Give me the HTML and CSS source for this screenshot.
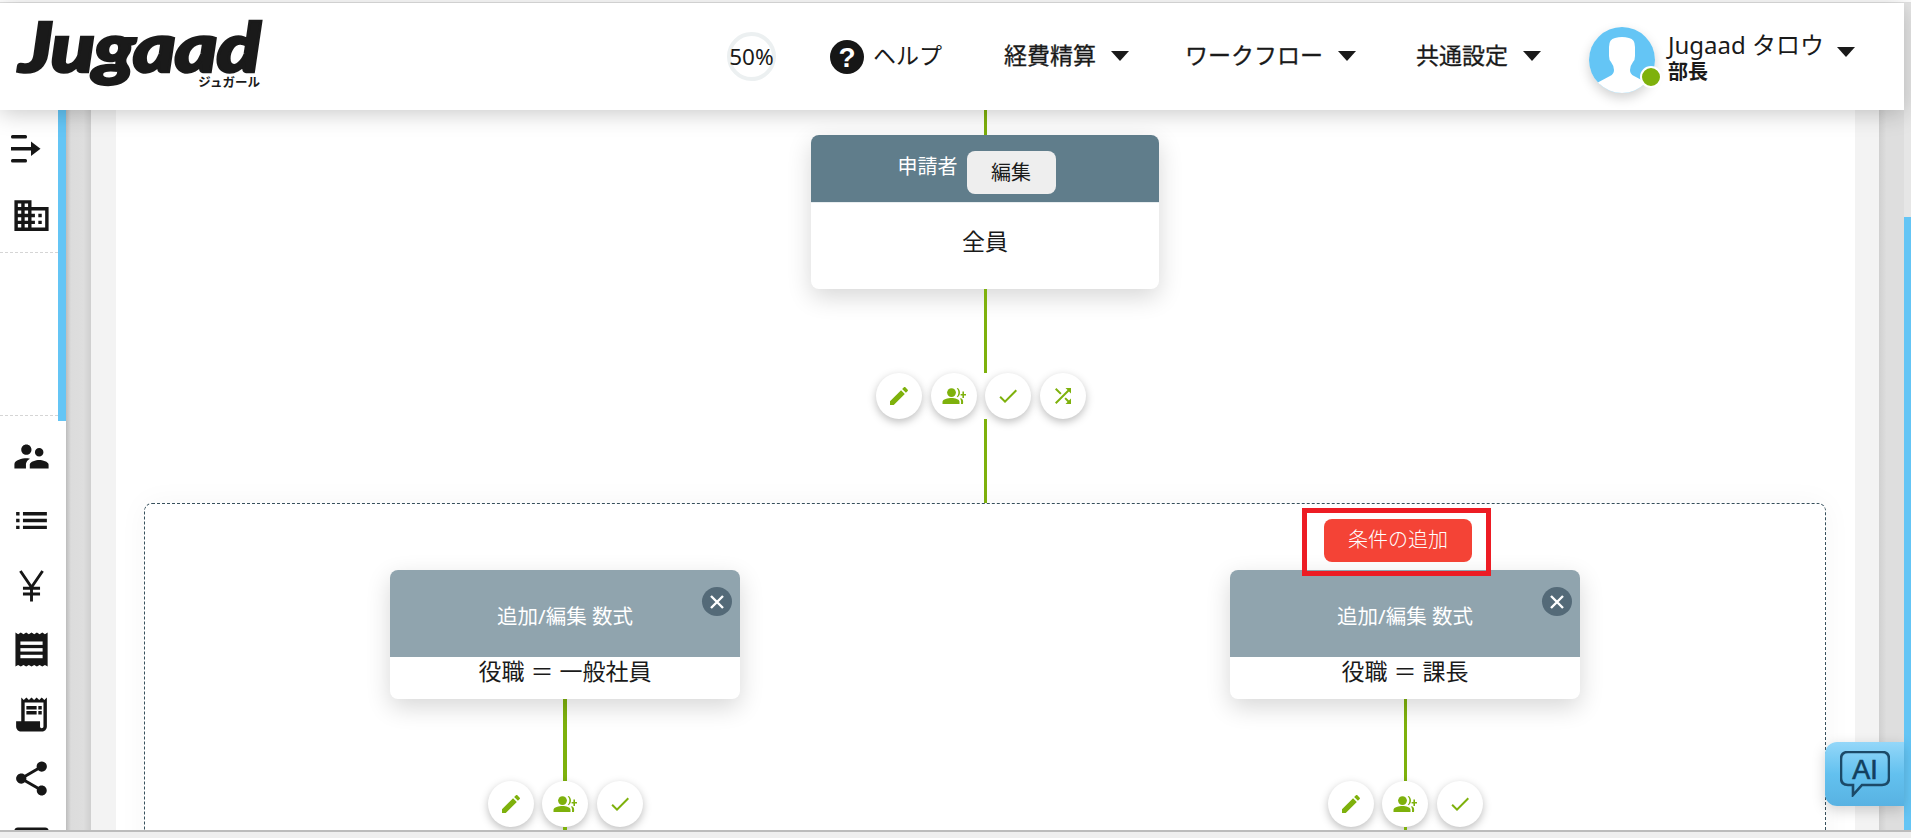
FILE: index.html
```html
<!DOCTYPE html>
<html lang="ja">

<head>
    <meta charset="utf-8">
    <title>Jugaad</title>
    <link rel="stylesheet" href="styles.css">
</head>

<body>
    <div class="page">
        <div class="top__line"></div>
        <div class="frame">
            <div class="content">
                <header class="header">
                    <div class="logo">
                        <span class="logo__word">Jugaad</span>
                        <span class="logo__kana">ジュガール</span>
                    </div>
                    <nav class="nav">
                        <div class="progress">50%</div>
                        <div class="nav__item help">
                            <svg class="help__icon" viewBox="0 0 34 34">
                                <circle cx="17" cy="17" r="17" fill="#161616"></circle>
                                <text x="17" y="27" text-anchor="middle" class="help__mark">?</text>
                            </svg>
                            ヘルプ
                        </div>
                        <div class="nav__item nav__item--expense">経費精算<span class="caret"></span></div>
                        <div class="nav__item nav__item--flow">ワークフロー<span class="caret"></span></div>
                        <div class="nav__item nav__item--common">共通設定<span class="caret"></span></div>
                        <div class="user">
                            <div class="avatar">
                                <svg viewBox="0 0 66 66">
                                    <defs>
                                        <clipPath id="avatarClip">
                                            <circle cx="33" cy="33" r="33"></circle>
                                        </clipPath>
                                    </defs>
                                    <g clip-path="url(#avatarClip)">
                                        <rect width="66" height="66" fill="#64c5f5"></rect>
                                        <path d="M26 11 Q33 9 40 11 Q46 12 46 20 V29 Q46 33 44 35 Q41 39 41 43 Q41 47 45 49 L60 57 V66 H6 V57 L21 49 Q25 47 25 43 Q25 39 22 35 Q20 33 20 29 V20 Q20 12 26 11Z" fill="#fff"></path>
                                    </g>
                                </svg>
                                <span class="avatar__dot"></span>
                            </div>
                            <div class="user__text">
                                <div class="user__name">Jugaad タロウ</div>
                                <div class="user__role">部長</div>
                            </div>
                            <span class="caret caret--user"></span>
                        </div>
                    </nav>
                </header>

                <div class="workspace">
                    <aside class="sidebar">
                        <div class="sidebar__icons">
                            <div class="side__group side__group--top">
                                <div class="side__item side__item--menu">
                                    <svg class="side__menu" viewBox="0 0 30 28">
                                        <rect x="0" y="0" width="16" height="3.5" rx="1.5"></rect>
                                        <rect x="0" y="12" width="21" height="3.5"></rect>
                                        <path d="M20 6.5 L29.5 13.7 L20 21Z"></path>
                                        <rect x="0" y="24" width="16" height="3.5" rx="1.5"></rect>
                                    </svg>
                                </div>
                                <div class="side__item side__item--domain">
                                    <svg class="side__icon" viewBox="0 0 24 24"><path d="M12 7V3H2v18h20V7H12zM6 19H4v-2h2v2zm0-4H4v-2h2v2zm0-4H4V9h2v2zm0-4H4V5h2v2zm4 12H8v-2h2v2zm0-4H8v-2h2v2zm0-4H8V9h2v2zm0-4H8V5h2v2zm10 12h-8v-2h2v-2h-2v-2h2v-2h-2V9h8v10zm-2-8h-2v2h2v-2zm0 4h-2v2h2v-2z"></path></svg>
                                </div>
                            </div>
                            <div class="side__blank"></div>
                            <div class="side__group side__group--bottom">
                                <div class="side__item">
                                    <svg class="side__icon" viewBox="0 0 24 24"><path d="M16.5 12c1.38 0 2.49-1.12 2.49-2.5S17.88 7 16.5 7C15.12 7 14 8.12 14 9.5s1.12 2.5 2.5 2.5zM9 11c1.66 0 2.99-1.34 2.99-3S10.66 5 9 5C7.34 5 6 6.34 6 8s1.34 3 3 3zm7.5 3c-1.83 0-5.5.92-5.5 2.75V19h11v-2.25c0-1.83-3.67-2.75-5.5-2.75zM9 13c-2.33 0-7 1.17-7 3.5V19h6.75v-2.25c0-.85.33-2.34 2.37-3.47C10.25 13.1 9.49 13 9 13z"></path></svg>
                                </div>
                                <div class="side__item">
                                    <svg class="side__icon" viewBox="0 0 24 24"><path d="M3 13h2v-2H3v2zm0 4h2v-2H3v2zm0-8h2V7H3v2zm4 4h14v-2H7v2zm0 4h14v-2H7v2zM7 7v2h14V7H7z"></path></svg>
                                </div>
                                <div class="side__item">
                                    <svg class="side__icon" viewBox="0 0 24 24">
                                        <path class="yen" d="M5.5 3.5 L12 13 L18.5 3.5 M12 13 V21.4 M7 13.6 H17 M7 17 H17"></path>
                                    </svg>
                                </div>
                                <div class="side__item">
                                    <svg class="side__icon" viewBox="0 0 24 24">
                                        <path d="M2.6 2 l1.57 1 1.57-1 1.57 1 1.57-1 1.57 1 1.57-1 1.57 1 1.57-1 1.57 1 1.57-1 1.57 1 1.57-1 V22 l-1.57-1 -1.57 1 -1.57-1 -1.57 1 -1.57-1 -1.57 1 -1.57-1 -1.57 1 -1.57-1 -1.57 1 -1.57-1 -1.57 1Z"></path>
                                        <rect x="5.5" y="7.3" width="13" height="2" fill="#fff"></rect>
                                        <rect x="5.5" y="11.2" width="13" height="2" fill="#fff"></rect>
                                        <rect x="5.5" y="15.1" width="13" height="2" fill="#fff"></rect>
                                    </svg>
                                </div>
                                <div class="side__item">
                                    <svg class="side__icon" viewBox="0 0 24 24"><path d="M19.5 3.5 18 2l-1.5 1.5L15 2l-1.5 1.5L12 2l-1.5 1.5L9 2 7.5 3.5 6 2v14H3v3c0 1.66 1.34 3 3 3h12c1.66 0 3-1.34 3-3V2l-1.5 1.5zM19 19c0 .55-.45 1-1 1s-1-.45-1-1v-3H8V5h11v14z"></path><path d="M9 7h6v2H9zm7 0h2v2h-2zm-7 3h6v2H9zm7 0h2v2h-2z"></path></svg>
                                </div>
                                <div class="side__item">
                                    <svg class="side__icon" viewBox="0 0 24 24"><path d="M18 16.08c-.76 0-1.44.3-1.96.77L8.91 12.7c.05-.23.09-.46.09-.7s-.04-.47-.09-.7l7.05-4.11c.54.5 1.25.81 2.04.81 1.66 0 3-1.34 3-3s-1.34-3-3-3-3 1.34-3 3c0 .24.04.47.09.7L8.04 9.81C7.5 9.31 6.79 9 6 9c-1.66 0-3 1.34-3 3s1.34 3 3 3c.79 0 1.5-.31 2.04-.81l7.12 4.16c-.05.21-.08.43-.08.65 0 1.61 1.31 2.92 2.92 2.92 1.61 0 2.92-1.31 2.92-2.92s-1.31-2.92-2.92-2.92z"></path></svg>
                                </div>
                                <div class="side__item">
                                    <svg class="side__icon" viewBox="0 0 24 24">
                                        <rect x="2" y="2.6" width="20" height="18.8" rx="2"></rect>
                                        <rect x="4" y="4.2" width="4.4" height="4" fill="#fff"></rect>
                                        <rect x="9.8" y="4.2" width="4.4" height="4" fill="#fff"></rect>
                                        <rect x="15.6" y="4.2" width="4.4" height="4" fill="#fff"></rect>
                                    </svg>
                                </div>
                            </div>
                        </div>
                        <div class="sidebar__track">
                            <div class="sidebar__thumb"></div>
                        </div>
                    </aside>

                    <div class="gutter"></div>
                    <div class="pale"></div>

                    <main class="canvas">
                        <div class="line line--in"></div>
                        <section class="card card--start">
                            <div class="card__head">
                                <span class="card__title">申請者</span>
                                <button class="edit__btn">編集</button>
                            </div>
                            <div class="card__body">全員</div>
                        </section>
                        <div class="line line--mid"></div>
                        <div class="actions actions--main">
                            <span class="action"><svg viewBox="0 0 24 24"><use href="#iconEdit"></use></svg></span>
                            <span class="action"><svg viewBox="0 0 24 24"><use href="#iconPerson"></use></svg></span>
                            <span class="action"><svg viewBox="0 0 24 24"><use href="#iconCheck"></use></svg></span>
                            <span class="action"><svg viewBox="0 0 24 24"><use href="#iconShuffle"></use></svg></span>
                        </div>
                        <div class="line line--mid"></div>

                        <section class="branches">
                            <div class="branch">
                                <div class="add__slot"></div>
                                <div class="card card--cond">
                                    <div class="card__head">追加/編集 数式<span class="close">
                                        <svg viewBox="0 0 24 24"><path d="M6 6 L18 18 M18 6 L6 18"></path></svg>
                                    </span></div>
                                    <div class="card__body">役職 ＝ 一般社員</div>
                                </div>
                                <div class="line line--branch line--thick"></div>
                                <div class="actions">
                                    <span class="action"><svg viewBox="0 0 24 24"><use href="#iconEdit"></use></svg></span>
                                    <span class="action"><svg viewBox="0 0 24 24"><use href="#iconPerson"></use></svg></span>
                                    <span class="action"><svg viewBox="0 0 24 24"><use href="#iconCheck"></use></svg></span>
                                </div>
                                <div class="line line--tail line--thick"></div>
                            </div>
                            <div class="branch">
                                <div class="add__slot">
                                    <button class="add__btn">条件の追加</button>
                                </div>
                                <div class="card card--cond">
                                    <div class="card__head">追加/編集 数式<span class="close">
                                        <svg viewBox="0 0 24 24"><path d="M6 6 L18 18 M18 6 L6 18"></path></svg>
                                    </span></div>
                                    <div class="card__body">役職 ＝ 課長</div>
                                </div>
                                <div class="line line--branch"></div>
                                <div class="actions">
                                    <span class="action"><svg viewBox="0 0 24 24"><use href="#iconEdit"></use></svg></span>
                                    <span class="action"><svg viewBox="0 0 24 24"><use href="#iconPerson"></use></svg></span>
                                    <span class="action"><svg viewBox="0 0 24 24"><use href="#iconCheck"></use></svg></span>
                                </div>
                                <div class="line line--tail"></div>
                            </div>
                        </section>
                    </main>

                    <div class="pale pale--right"></div>
                    <div class="gutter gutter--right"></div>
                </div>
            </div>
            <div class="vscroll">
                <div class="vscroll__thumb"></div>
            </div>
        </div>
        <div class="hscroll"></div>
    </div>

    <div class="ai">
        <svg viewBox="0 0 50 46">
            <path class="ai__bubble" d="M8 1 H42 Q49 1 49 8 V27 Q49 34 42 34 H22 L13 44 V34 H8 Q1 34 1 27 V8 Q1 1 8 1Z"></path>
            <text x="25" y="28" text-anchor="middle" class="ai__text">AI</text>
        </svg>
    </div>

    <svg class="sprites">
        <symbol id="iconEdit" viewBox="0 0 24 24">
            <path d="M3 17.25V21h3.75L17.81 9.94l-3.75-3.75L3 17.25zM20.71 7.04c.39-.39.39-1.02 0-1.41l-2.34-2.34c-.39-.39-1.02-.39-1.41 0l-1.83 1.83 3.75 3.75 1.83-1.83z"></path>
        </symbol>
        <symbol id="iconPerson" viewBox="0 0 24 24">
            <circle cx="9.5" cy="8.6" r="4.4"></circle>
            <path d="M0.5 20 V17.8 C0.5 15 6 13.9 9.5 13.9 C13 13.9 17.5 15 17.5 17.8 V20Z"></path>
            <path d="M14.7 4.4 C17 6 17 11 14.7 12.8 L15.6 13.2 C18.8 11.4 18.8 5.8 15.6 4Z"></path>
            <path d="M19 14.2 C21 15 21.5 17 21 20 H19 C19.2 17.8 19.2 16 18 14.6Z"></path>
            <path d="M20.4 7.5 H22 V10 H24 V11.6 H22 V14 H20.4 V11.6 H18.6 V10 H20.4Z"></path>
        </symbol>
        <symbol id="iconCheck" viewBox="0 0 24 24">
            <path d="M9 16.17L4.83 12l-1.42 1.41L9 19 21 7l-1.41-1.41z"></path>
        </symbol>
        <symbol id="iconShuffle" viewBox="0 0 24 24">
            <path d="M10.59 9.17L5.41 4 4 5.41l5.17 5.17 1.42-1.41zM14.5 4l2.04 2.04L4 18.59 5.41 20 17.96 7.46 20 9.5V4h-5.5zm.33 9.41l-1.41 1.41 3.13 3.13L14.5 20H20v-5.5l-2.04 2.04-3.13-3.13z"></path>
        </symbol>
    </svg>
</body>

</html>
```

FILE: styles.css
```css
* {
    box-sizing: border-box;
}

html,
body {
    margin: 0;
    padding: 0;
    height: 100%;
    overflow: hidden;
}

body {
    background-color: #fff;
    color: #1a1a1a;
    font-family: "Noto Sans", "Noto Sans CJK JP", sans-serif;
}

.page {
    display: flex;
    flex-flow: column;
    height: 838px;
}

.top__line {
    height: 3px;
    flex: none;
    background-color: #fff;
    border-bottom: 1px solid #e3e3e3;
}

.frame {
    display: flex;
    flex: 1 1 auto;
    min-height: 0;
}

.content {
    display: flex;
    flex-flow: column;
    flex: 1 1 auto;
    min-width: 0;
}

/* header */

.header {
    position: relative;
    z-index: 3;
    display: flex;
    align-items: center;
    justify-content: space-between;
    flex: none;
    height: 107px;
    padding: 0 49px 0 17px;
    background-color: #fff;
    box-shadow: 0 3px 22px rgba(0, 0, 0, 0.22);
}

.logo {
    display: flex;
    flex-flow: column;
    align-items: flex-end;
    width: 247px;
    margin-bottom: 10px;
}

.logo__word {
    width: 100%;
    font-family: Lato, sans-serif;
    font-weight: 900;
    font-style: italic;
    font-size: 68px;
    line-height: 54px;
    letter-spacing: -1px;
    color: #1a1a1a;
    -webkit-text-stroke: 2.5px #1a1a1a;
    transform: translate(2px, 4px) scaleX(1.2);
    transform-origin: left center;
}

.logo__kana {
    margin: 6px 4px 0 0;
    font-family: "Noto Sans CJK JP", sans-serif;
    font-weight: 700;
    font-size: 12.5px;
    line-height: 14px;
}

.nav {
    display: flex;
    align-items: center;
    font-size: 23px;
}

.progress {
    display: flex;
    align-items: center;
    justify-content: center;
    width: 49px;
    height: 49px;
    margin-right: 54px;
    border: 4px solid #ecf0f1;
    border-radius: 50%;
    font-size: 22.5px;
    white-space: nowrap;
}

.nav__item {
    display: flex;
    align-items: center;
    padding-bottom: 6px;
    -webkit-text-stroke: 0.3px #1a1a1a;
    white-space: nowrap;
}

.nav__item--expense {
    margin-right: 56px;
}

.nav__item--flow {
    margin-right: 60px;
}

.nav__item--common {
    margin-right: 48px;
}

.help {
    gap: 9px;
    margin-right: 62px;
    -webkit-text-stroke: 0;
}

.help__icon {
    width: 34px;
    height: 34px;
    margin-top: 6px;
}

.help__mark {
    font-family: "Liberation Sans", sans-serif;
    font-weight: 700;
    font-size: 28px;
    fill: #fff;
}

.caret {
    width: 0;
    height: 0;
    margin-left: 15px;
    margin-top: 4px;
    border-left: 9px solid transparent;
    border-right: 9px solid transparent;
    border-top: 10px solid #1a1a1a;
}

.user {
    display: flex;
    align-items: center;
}

.avatar {
    position: relative;
    width: 66px;
    height: 66px;
    margin-top: 6px;
    border-radius: 50%;
    box-shadow: 0 5px 12px rgba(0, 0, 0, 0.18);
}

.avatar svg {
    display: block;
    width: 66px;
    height: 66px;
}

.avatar__dot {
    position: absolute;
    right: -7px;
    bottom: 5px;
    width: 22px;
    height: 22px;
    border: 2px solid #fff;
    border-radius: 50%;
    background-color: #7eb10c;
}

.user__text {
    margin-left: 13px;
    white-space: nowrap;
}

.user__name {
    font-size: 24px;
    line-height: 30px;
}

.user__role {
    font-size: 20px;
    font-weight: 700;
    line-height: 24px;
}

.caret--user {
    margin: -10px 0 0 13px;
}

/* body of the page */

.workspace {
    display: flex;
    flex: 1 1 auto;
    min-height: 0;
    overflow: hidden;
}

.sidebar {
    display: flex;
    flex: none;
    width: 66px;
    background-color: #fff;
}

.sidebar__icons {
    display: flex;
    flex-flow: column;
    width: 58px;
    color: #161616;
}

.sidebar__track {
    width: 8px;
}

.sidebar__thumb {
    height: 311px;
    background-color: #64c5f5;
}

.side__group {
    flex: none;
}

.side__group--top {
    height: 143px;
    padding-top: 7px;
    border-bottom: 1px dashed #d5d5d5;
}

.side__blank {
    height: 163px;
    flex: none;
    border-bottom: 1px dashed #d5d5d5;
}

.side__group--bottom {
    padding-top: 8px;
}

.side__item {
    display: flex;
    align-items: center;
    justify-content: center;
    height: 64.5px;
    padding-left: 4px;
}

.side__item--menu {
    justify-content: flex-start;
    padding-left: 11px;
}

.side__item--domain {
    margin-top: 2px;
}

.side__icon {
    width: 41px;
    height: 41px;
    fill: #161616;
}

.side__menu {
    width: 30px;
    height: 28px;
    fill: #161616;
}

.yen {
    fill: none;
    stroke: #161616;
    stroke-width: 1.7;
}

.gutter {
    flex: none;
    width: 25px;
    background: linear-gradient(to right, #bdbdbd, #dcdcdc 20%, #dedede 70%, #cfcfcf);
}

.gutter--right {
    background: linear-gradient(to right, #d0d0d0, #dedede 30%);
}

.pale {
    flex: none;
    width: 25px;
    background-color: #f3f3f3;
}

.pale--right {
    width: 24px;
}

/* flow chart */

.canvas {
    display: flex;
    flex-flow: column;
    align-items: center;
    flex: 1 1 auto;
    min-width: 0;
    padding-right: 1px;
    background-color: #fff;
}

.line {
    flex: none;
    width: 3px;
    background-color: #7eb10c;
}

.line--thick {
    width: 4px;
}

.line--in {
    height: 25px;
}

.line--mid {
    height: 84px;
}

.line--branch {
    height: 82px;
}

.line--tail {
    height: 10px;
}

.card {
    flex: none;
    overflow: hidden;
    border-radius: 8px;
    background-color: #fff;
    box-shadow: 0 8px 24px rgba(0, 0, 0, 0.16);
}

.card--start {
    width: 348px;
    height: 154px;
}

.card--start .card__head {
    display: flex;
    justify-content: center;
    gap: 9px;
    height: 68px;
    padding: 16px 17px 0 0;
    background-color: #607d8b;
    border-bottom: 1px solid #e8edef;
    color: #fff;
}

.card__title {
    margin-top: 1px;
    font-size: 20px;
    line-height: 30px;
}

.edit__btn {
    width: 89px;
    height: 43px;
    padding-bottom: 4px;
    border: 0;
    border-radius: 8px;
    background-color: #eee;
    color: #1a1a1a;
    font-family: inherit;
    font-size: 20px;
}

.card__body {
    font-size: 23px;
    text-align: center;
}

.card--start .card__body {
    padding-top: 22px;
    line-height: 32px;
}

.actions {
    display: flex;
    flex: none;
    gap: 8.5px;
}

.actions--main {
    margin-right: 8px;
}

.action {
    display: flex;
    align-items: center;
    justify-content: center;
    width: 46px;
    height: 46px;
    border-radius: 50%;
    background-color: #fff;
    box-shadow: 0 3px 8px rgba(0, 0, 0, 0.26);
}

.action svg {
    width: 24px;
    height: 24px;
    fill: #7eb10c;
}

.branches {
    display: grid;
    grid-template-columns: 1fr 1fr;
    flex: none;
    width: 1682px;
    height: 500px;
    padding-top: 15px;
    border: 1px dashed #37505c;
    border-radius: 8px;
    box-shadow: 0 0 30px rgba(0, 0, 0, 0.04);
}

.branch {
    display: flex;
    flex-flow: column;
    align-items: center;
}

.add__slot {
    display: flex;
    justify-content: center;
    width: 100%;
    height: 51px;
    padding-right: 14px;
}

.add__btn {
    position: relative;
    z-index: 1;
    width: 148px;
    height: 43px;
    padding-bottom: 6px;
    border: 0;
    border-radius: 8px;
    background-color: #f44336;
    color: #fff;
    font-family: inherit;
    font-size: 20px;
    font-weight: 300;
}

/* red mark on the screenshot */
.add__btn::after {
    content: "";
    position: absolute;
    top: -11px;
    left: -22px;
    right: -19px;
    bottom: -14px;
    border: 5px solid #ed1c24;
}

.card--cond {
    position: relative;
    width: 350px;
    height: 129px;
}

.card--cond .card__head {
    display: flex;
    align-items: center;
    justify-content: center;
    height: 87px;
    padding-top: 2px;
    background-color: #90a4ae;
    color: #fff;
    font-size: 20.5px;
}

.card--cond .card__body {
    line-height: 29px;
    height: 42px;
}

.close {
    position: absolute;
    top: 17px;
    right: 8px;
    display: flex;
    width: 30px;
    height: 29px;
    align-items: center;
    justify-content: center;
    border-radius: 50%;
    background-color: #546a78;
}

.close svg {
    width: 24px;
    height: 24px;
    fill: none;
    stroke: #fff;
    stroke-width: 2.4;
}

/* scroll bars */

.vscroll {
    flex: none;
    width: 7px;
    padding-top: 214px;
    background-color: #e6e6e6;
}

.vscroll__thumb {
    height: 100%;
    background-color: #64c5f5;
}

.hscroll {
    flex: none;
    height: 8px;
    border-top: 2px solid #bcbcbc;
    background-color: #efefef;
}

/* floating AI button */

.ai {
    position: absolute;
    top: 742px;
    left: 1825px;
    display: flex;
    align-items: center;
    justify-content: center;
    width: 79px;
    height: 64px;
    border-radius: 12px 0 0 12px;
    background: linear-gradient(to bottom, #94d7f9, #63c1ef 50%, #58b2e2);
    box-shadow: 0 4px 14px rgba(0, 0, 0, 0.18);
}

.ai svg {
    width: 50px;
    height: 46px;
}

.ai__bubble {
    fill: none;
    stroke: #1c4a68;
    stroke-width: 2.6;
}

.ai__text {
    font-family: "Liberation Sans", sans-serif;
    font-size: 27px;
    fill: #123f5e;
    stroke: #123f5e;
    stroke-width: 0.6;
}

.sprites {
    position: absolute;
    width: 0;
    height: 0;
}
```
